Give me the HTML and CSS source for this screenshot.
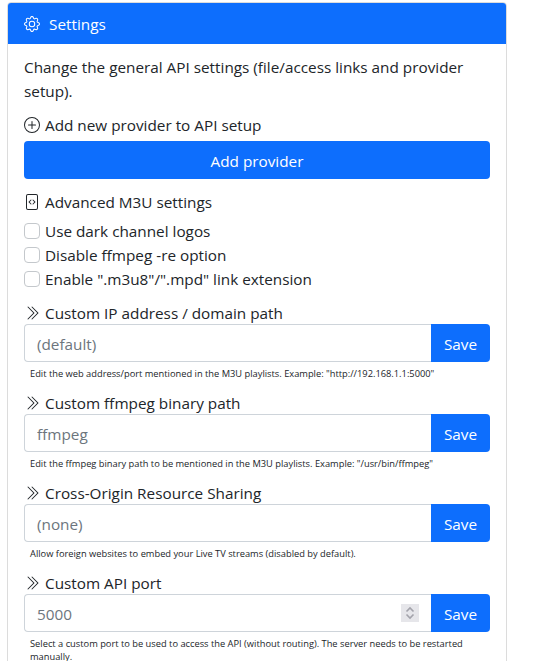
FILE: index.html
```html
<!DOCTYPE html>
<html lang="en">

<head>
    <meta charset="UTF-8" />
    <meta name="viewport" content="width=device-width, initial-scale=1.0" />
    <title>Settings</title>
    <link rel="stylesheet" href="styles.css">
</head>

<body>
    <svg class="icon-defs" xmlns="http://www.w3.org/2000/svg">
        <symbol id="bi-gear" viewBox="0 0 16 16">
            <path d="M8 4.754a3.246 3.246 0 1 0 0 6.492 3.246 3.246 0 0 0 0-6.492zM5.754 8a2.246 2.246 0 1 1 4.492 0 2.246 2.246 0 0 1-4.492 0z"/>
            <path d="M9.796 1.343c-.527-1.79-3.065-1.79-3.592 0l-.094.319a.873.873 0 0 1-1.255.52l-.292-.16c-1.64-.892-3.433.902-2.54 2.541l.159.292a.873.873 0 0 1-.52 1.255l-.319.094c-1.79.527-1.79 3.065 0 3.592l.319.094a.873.873 0 0 1 .52 1.255l-.16.292c-.892 1.64.901 3.434 2.541 2.54l.292-.159a.873.873 0 0 1 1.255.52l.094.319c.527 1.79 3.065 1.79 3.592 0l.094-.319a.873.873 0 0 1 1.255-.52l.292.16c1.64.893 3.434-.902 2.54-2.541l-.159-.292a.873.873 0 0 1 .52-1.255l.319-.094c1.79-.527 1.79-3.065 0-3.592l-.319-.094a.873.873 0 0 1-.52-1.255l.16-.292c.893-1.64-.902-3.433-2.541-2.54l-.292.159a.873.873 0 0 1-1.255-.52l-.094-.319zm-2.633.283c.246-.835 1.428-.835 1.674 0l.094.319a1.873 1.873 0 0 0 2.693 1.115l.291-.16c.764-.415 1.6.42 1.184 1.185l-.159.292a1.873 1.873 0 0 0 1.116 2.692l.318.094c.835.246.835 1.428 0 1.674l-.319.094a1.873 1.873 0 0 0-1.115 2.693l.16.291c.415.764-.42 1.6-1.185 1.184l-.291-.159a1.873 1.873 0 0 0-2.693 1.116l-.094.318c-.246.835-1.428.835-1.674 0l-.094-.319a1.873 1.873 0 0 0-2.692-1.115l-.292.16c-.764.415-1.6-.42-1.184-1.185l.159-.291A1.873 1.873 0 0 0 1.945 8.93l-.319-.094c-.835-.246-.835-1.428 0-1.674l.319-.094A1.873 1.873 0 0 0 3.06 4.377l-.16-.292c-.415-.764.42-1.6 1.185-1.184l.292.159a1.873 1.873 0 0 0 2.692-1.115l.094-.319z"/>
        </symbol>
        <symbol id="bi-plus-circle" viewBox="0 0 16 16">
            <path d="M8 15A7 7 0 1 1 8 1a7 7 0 0 1 0 14zm0 1A8 8 0 1 0 8 0a8 8 0 0 0 0 16z"/>
            <path d="M8 4a.5.5 0 0 1 .5.5v3h3a.5.5 0 0 1 0 1h-3v3a.5.5 0 0 1-1 0v-3h-3a.5.5 0 0 1 0-1h3v-3A.5.5 0 0 1 8 4z"/>
        </symbol>
        <symbol id="bi-file-code" viewBox="0 0 16 16">
            <path d="M6.646 5.646a.5.5 0 1 1 .708.708L5.707 8l1.647 1.646a.5.5 0 0 1-.708.708l-2-2a.5.5 0 0 1 0-.708l2-2zm2.708 0a.5.5 0 1 0-.708.708L10.293 8 8.646 9.646a.5.5 0 0 0 .708.708l2-2a.5.5 0 0 0 0-.708l-2-2z"/>
            <path d="M2 2a2 2 0 0 1 2-2h8a2 2 0 0 1 2 2v12a2 2 0 0 1-2 2H4a2 2 0 0 1-2-2V2zm10-1H4a1 1 0 0 0-1 1v12a1 1 0 0 0 1 1h8a1 1 0 0 0 1-1V2a1 1 0 0 0-1-1z"/>
        </symbol>
        <symbol id="bi-chevrons" viewBox="0 0 16 16">
            <path d="M3.646 1.646a.5.5 0 0 1 .708 0l6 6a.5.5 0 0 1 0 .708l-6 6a.5.5 0 0 1-.708-.708L9.293 8 3.646 2.354a.5.5 0 0 1 0-.708z"/>
            <path d="M7.646 1.646a.5.5 0 0 1 .708 0l6 6a.5.5 0 0 1 0 .708l-6 6a.5.5 0 0 1-.708-.708L13.293 8 7.646 2.354a.5.5 0 0 1 0-.708z"/>
        </symbol>
    </svg>

    <div class="card">
        <div class="card-header">
            <svg class="icon"><use href="#bi-gear"/></svg>
            <span>Settings</span>
        </div>
        <div class="card-body">
            <p class="intro">Change the general API settings (file/access links and provider setup).</p>

            <div class="row-title"><svg class="icon"><use href="#bi-plus-circle"/></svg> Add new provider to API setup</div>
            <button class="btn btn-wide" type="button">Add provider</button>

            <div class="row-title advanced"><svg class="icon"><use href="#bi-file-code"/></svg> Advanced M3U settings</div>
            <label class="check"><input type="checkbox"> Use dark channel logos</label>
            <label class="check"><input type="checkbox"> Disable ffmpeg -re option</label>
            <label class="check"><input type="checkbox"> Enable ".m3u8"/".mpd" link extension</label>

            <section class="field">
                <div class="row-title"><svg class="icon"><use href="#bi-chevrons"/></svg> Custom IP address / domain path</div>
                <div class="input-group">
                    <input type="text" placeholder="(default)">
                    <button class="btn" type="button">Save</button>
                </div>
                <small>Edit the web address/port mentioned in the M3U playlists. Example: "http://192.168.1.1:5000"</small>
            </section>

            <section class="field">
                <div class="row-title"><svg class="icon"><use href="#bi-chevrons"/></svg> Custom ffmpeg binary path</div>
                <div class="input-group">
                    <input type="text" placeholder="ffmpeg">
                    <button class="btn" type="button">Save</button>
                </div>
                <small>Edit the ffmpeg binary path to be mentioned in the M3U playlists. Example: "/usr/bin/ffmpeg"</small>
            </section>

            <section class="field">
                <div class="row-title"><svg class="icon"><use href="#bi-chevrons"/></svg> Cross-Origin Resource Sharing</div>
                <div class="input-group">
                    <input type="text" placeholder="(none)">
                    <button class="btn" type="button">Save</button>
                </div>
                <small>Allow foreign websites to embed your Live TV streams (disabled by default).</small>
            </section>

            <section class="field">
                <div class="row-title"><svg class="icon"><use href="#bi-chevrons"/></svg> Custom API port</div>
                <div class="input-group">
                    <div class="port-wrap">
                        <input type="number" class="port-input" placeholder="5000">
                        <svg class="spinner" viewBox="0 0 18 18">
                            <path d="M5.5 7.5 9 4l3.500 3.500M5.500 10.500 9 14l3.500-3.500"/>
                        </svg>
                    </div>
                    <button class="btn" type="button">Save</button>
                </div>
                <small>Select a custom port to be used to access the API (without routing). The server needs to be restarted manually.</small>
            </section>
        </div>
    </div>
</body>

</html>
```

FILE: styles.css
```css
html,
body {
    height: 100%;
    overflow: hidden;
}

body {
    margin: 0;
    padding: 2px 29px 0 7px;
    background-color: #fff;
    color: #212529;
    font-family: 'Open Sans', 'Noto Sans', sans-serif;
    font-size: 15.3px;
    line-height: 24px;
    box-sizing: border-box;
}

.icon-defs {
    display: none;
}

.icon {
    width: 16px;
    height: 16px;
    fill: currentColor;
    flex-shrink: 0;
}

.card {
    border: 1px solid #dcdcdc;
    border-radius: 4px;
    background-color: #fff;
}

.card-header {
    display: flex;
    align-items: center;
    gap: 9px;
    height: 41px;
    padding: 0 16px;
    background-color: #0d6efd;
    color: white;
    border-radius: 3px 3px 0 0;
}

.card-body {
    padding: 11px 16px 16px;
}

.intro {
    margin: 0 0 10px;
}

.row-title {
    display: flex;
    align-items: center;
    gap: 5px;
}

.btn {
    border: none;
    background-color: #0d6efd;
    color: white;
    font: inherit;
    border-radius: 4px;
    padding: 2px 12px 0;
    height: 38px;
}

.btn-wide {
    display: block;
    width: 100%;
    margin: 4px 0 11px;
}

.advanced {
    margin-bottom: 5px;
}

.check {
    display: flex;
    align-items: center;
    gap: 5px;
}

.check input {
    appearance: none;
    width: 16px;
    height: 16px;
    margin: 0;
    border: 1px solid #c4c8cc;
    border-radius: 4px;
    background-color: #fff;
}

.field {
    margin-top: 10px;
}

.field + .field {
    margin-top: 11px;
}

.field .row-title {
    margin-bottom: -1px;
}

.input-group {
    display: flex;
    height: 38px;
}

.input-group input {
    flex: 1;
    width: 100%;
    min-width: 0;
    padding: 2px 12px 0;
    border: 1px solid #ced4da;
    border-right: none;
    border-radius: 4px 0 0 4px;
    color: #212529;
    font: inherit;
    outline: none;
    box-sizing: border-box;
}

.input-group input::placeholder {
    color: #6c757d;
}

.input-group .btn {
    flex: 0 0 59px;
    padding: 2px 0 0;
    border-radius: 0 4px 4px 0;
}

.port-wrap {
    position: relative;
    display: flex;
    flex: 1;
    min-width: 0;
}

.port-input::-webkit-inner-spin-button {
    display: none;
}

.spinner {
    position: absolute;
    top: 10px;
    right: 12px;
    width: 18px;
    height: 18px;
    background-color: #e6e6ea;
    fill: none;
    stroke: #a3a3ab;
    stroke-width: 1.6;
}

small {
    display: block;
    padding: 5px 0 0 6px;
    font-size: 9.3px;
    line-height: 13px;
}
```
